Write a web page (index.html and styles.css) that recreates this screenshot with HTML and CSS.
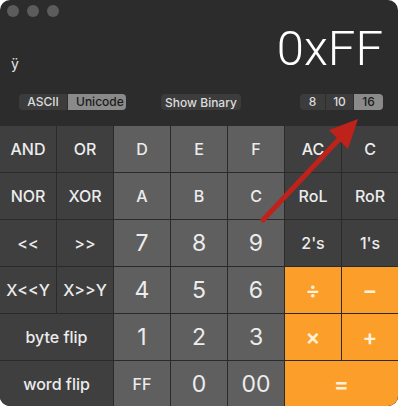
FILE: index.html
```html
<!DOCTYPE html>
<html lang="en">
<head>
  <meta charset="UTF-8">
  <meta name="viewport" content="width=device-width, initial-scale=1.0">
  <title>Programmer Calculator</title>
  <link rel="stylesheet" href="styles.css">
</head>
<body>
  <div class="window">
    <div class="titlebar">
      <span class="light"></span>
      <span class="light"></span>
      <span class="light"></span>
    </div>

    <div class="display">
      <div class="char">ÿ</div>
      <div class="value">0xFF</div>
    </div>

    <div class="controls">
      <div class="segment">
        <span class="seg">ASCII</span>
        <span class="seg on">Unicode</span>
      </div>
      <button class="plain">Show Binary</button>
      <div class="segment base">
        <span class="seg">8</span>
        <span class="seg">10</span>
        <span class="seg on">16</span>
      </div>
    </div>

    <div class="keys">
      <button class="key dark">AND</button>
      <button class="key dark">OR</button>
      <button class="key mid">D</button>
      <button class="key mid">E</button>
      <button class="key mid">F</button>
      <button class="key dark">AC</button>
      <button class="key dark">C</button>

      <button class="key dark">NOR</button>
      <button class="key dark">XOR</button>
      <button class="key mid">A</button>
      <button class="key mid">B</button>
      <button class="key mid">C</button>
      <button class="key dark">RoL</button>
      <button class="key dark">RoR</button>

      <button class="key dark">&lt;&lt;</button>
      <button class="key dark">&gt;&gt;</button>
      <button class="key mid num">7</button>
      <button class="key mid num">8</button>
      <button class="key mid num">9</button>
      <button class="key dark">2's</button>
      <button class="key dark">1's</button>

      <button class="key dark">X&lt;&lt;Y</button>
      <button class="key dark">X&gt;&gt;Y</button>
      <button class="key mid num">4</button>
      <button class="key mid num">5</button>
      <button class="key mid num">6</button>
      <button class="key op">÷</button>
      <button class="key op">−</button>

      <button class="key dark wide">byte flip</button>
      <button class="key mid num">1</button>
      <button class="key mid num">2</button>
      <button class="key mid num">3</button>
      <button class="key op">×</button>
      <button class="key op">+</button>

      <button class="key dark wide">word flip</button>
      <button class="key mid">FF</button>
      <button class="key mid num">0</button>
      <button class="key mid num">00</button>
      <button class="key op wide">=</button>
    </div>

    <!-- annotation arrow -->
    <svg class="arrow" width="398" height="406" viewBox="0 0 398 406">
      <line x1="263" y1="220" x2="342" y2="136" stroke="#bf221b" stroke-width="5" stroke-linecap="round"/>
      <polygon points="358,119 329,130 348,149" fill="#bf221b"/>
    </svg>
  </div>
</body>
</html>
```

FILE: styles.css
```css
* {
  box-sizing: border-box;
}

body {
  margin: 0;
  background: #fff;
  font-family: Inter, "Liberation Sans", sans-serif;
}

.window {
  position: relative;
  width: 398px;
  height: 406px;
  background: #2c2c2c;
  border-radius: 10px;
  overflow: hidden;
}

.titlebar {
  height: 22px;
  display: flex;
  align-items: center;
  gap: 8px;
  padding-left: 7px;
}

.light {
  width: 12px;
  height: 12px;
  border-radius: 50%;
  background: #5c5c5c;
}

.display {
  height: 66px;
  display: flex;
  justify-content: space-between;
  align-items: flex-end;
  padding: 0 15px 0 11px;
}

.char {
  color: #e6e6e6;
  font-size: 14px;
  margin-bottom: 16px;
}

.value {
  font-family: Roboto, sans-serif;
  font-weight: 300;
  font-size: 49px;
  color: #fff;
  line-height: 1;
  margin-bottom: 15px;
}

.controls {
  height: 38px;
  display: flex;
  align-items: flex-start;
  padding: 6px 15px 0 19px;
}

.segment {
  display: flex;
  height: 16px;
  border-radius: 4px;
  overflow: hidden;
  background: #3c3c3c;
}

.seg {
  font-size: 12px;
  font-weight: 500;
  line-height: 16px;
  color: #dcdcdc;
  padding: 0 8px;
  border-left: 1px solid #2e2e2e;
}

.seg:first-child {
  border-left: none;
}

.seg.on {
  background: #8a8a8a;
  color: #1a1a1a;
}

.segment .seg:first-child {
  width: 48px;
  text-align: center;
}

.segment .seg.on {
  width: 59px;
  text-align: center;
}

.base .seg {
  width: 28px;
  padding: 0;
  text-align: center;
}

.base .seg:first-child {
  width: 25px;
}

.base .seg.on {
  width: 30px;
}

.plain {
  margin-left: 35px;
  margin-right: auto;
  height: 16px;
  width: 80px;
  padding: 0;
  border: none;
  border-radius: 4px;
  background: #3c3c3c;
  color: #dcdcdc;
  font-family: inherit;
  font-size: 12px;
  font-weight: 500;
}

.keys {
  display: grid;
  grid-template-columns: repeat(7, 56px);
  grid-auto-rows: 46px;
  gap: 1px;
  background: #2a2a2a;
}

.key {
  border: none;
  padding: 0;
  font-family: inherit;
  font-size: 16px;
  font-weight: 500;
  color: #ececec;
}

.key.dark {
  background: #3f3f3f;
}

.key.mid {
  background: #5f5f5f;
}

.key.op {
  background: #fc9e2a;
  color: #fff1d8;
  font-size: 22px;
  font-weight: 600;
}

.key.num {
  font-size: 23px;
  font-weight: 400;
}

.wide {
  grid-column: span 2;
}

.arrow {
  position: absolute;
  left: 0;
  top: 0;
  pointer-events: none;
}
```
